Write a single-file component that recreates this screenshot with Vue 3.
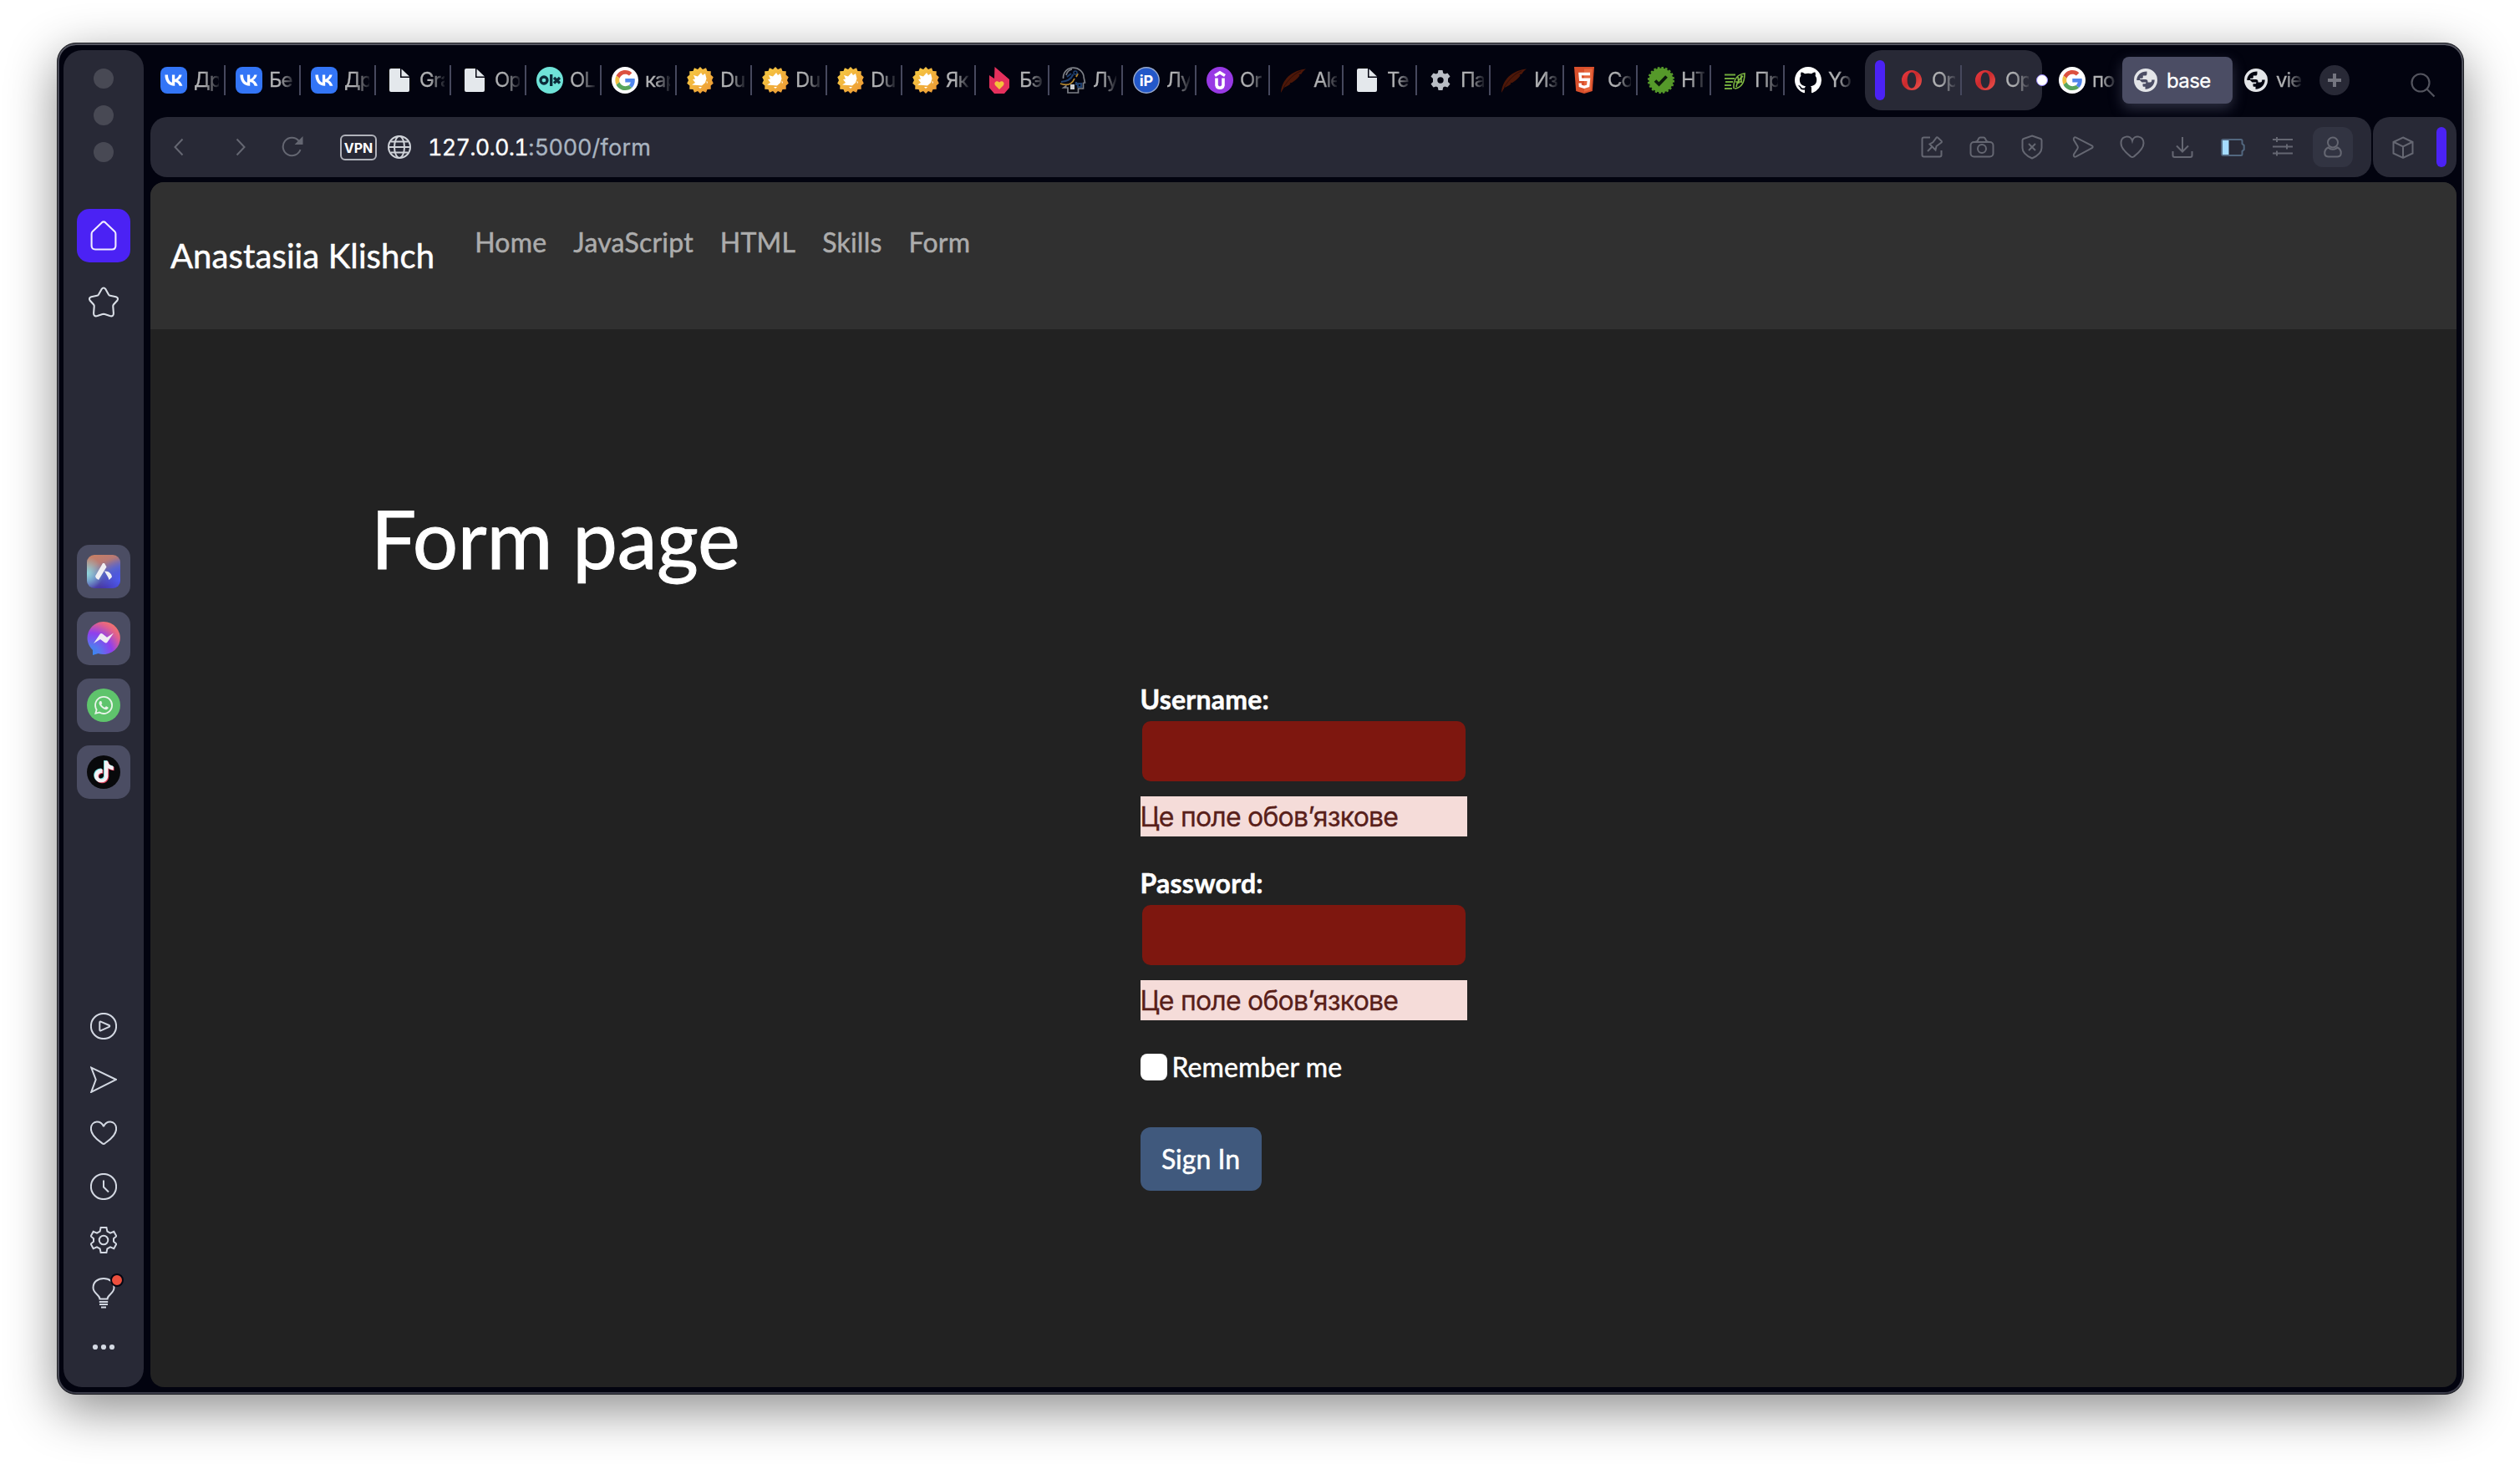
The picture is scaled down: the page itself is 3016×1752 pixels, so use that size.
<script setup>
const tabs = [
  { icon: 'vk', label: 'Др' },
  { icon: 'vk', label: 'Бе' },
  { icon: 'vk', label: 'Др' },
  { icon: 'file', label: 'Gra' },
  { icon: 'file', label: 'Op' },
  { icon: 'olx', label: 'OL' },
  { icon: 'google', label: 'кар' },
  { icon: 'dove', label: 'Du' },
  { icon: 'dove', label: 'Du' },
  { icon: 'dove', label: 'Du' },
  { icon: 'dove', label: 'Як', narrow: true },
  { icon: 'fire', label: 'Бэ', narrow: true },
  { icon: 'head', label: 'Лу', narrow: true },
  { icon: 'ip', label: 'Лу', narrow: true },
  { icon: 'udemy', label: 'Or', narrow: true },
  { icon: 'feather', label: 'Ale', narrow: true },
  { icon: 'file', label: 'Te', narrow: true },
  { icon: 'cog', label: 'Па', narrow: true },
  { icon: 'feather', label: 'Из', narrow: true },
  { icon: 'html5', label: 'Co', narrow: true },
  { icon: 'check', label: 'HT', narrow: true },
  { icon: 'leaf', label: 'Пр', narrow: true },
  { icon: 'github', label: 'Yo', narrow: true, last: true },
]
const apps = ['aria', 'messenger', 'whatsapp', 'tiktok']
const tools = ['player', 'send', 'heart', 'clock', 'gear', 'bulb', 'dots']
const actions = ['pin', 'camera', 'shield', 'flow', 'like', 'download', 'battery', 'sliders']
const links = ['Home', 'JavaScript', 'HTML', 'Skills', 'Form']
const fields = [
  { id: 'username', label: 'Username:', type: 'text' },
  { id: 'password', label: 'Password:', type: 'password' },
]
const requiredMessage = 'Це поле обовʼязкове'
</script>

<template>
  <div class="desktop">
    <svg class="sprite" aria-hidden="true">
      <defs>
        <linearGradient id="g-dove" x1="0" y1="0" x2="1" y2="1"><stop offset="0" stop-color="#f7cf45" /><stop offset="1" stop-color="#ec9433" /></linearGradient>
        <linearGradient id="g-opera" x1="0" y1="0" x2="1" y2="1"><stop offset="0" stop-color="#ef3b42" /><stop offset=".45" stop-color="#c92a2d" /><stop offset="1" stop-color="#f0554f" /></linearGradient>
        <linearGradient id="g-aria" x1=".1" y1="0" x2=".5" y2="1"><stop offset="0" stop-color="#c98063" /><stop offset=".3" stop-color="#b97a74" /><stop offset=".62" stop-color="#5d68b8" /><stop offset="1" stop-color="#4430a0" /></linearGradient>
        <radialGradient id="g-aria-l" cx="0" cy=".55" r=".5"><stop offset="0" stop-color="#8fdae0" /><stop offset="1" stop-color="#8fdae0" stop-opacity="0" /></radialGradient>
        <radialGradient id="g-aria-r" cx="1" cy=".75" r=".65"><stop offset="0" stop-color="#4d5cf0" /><stop offset="1" stop-color="#4d5cf0" stop-opacity="0" /></radialGradient>
        <radialGradient id="g-msg" cx=".1" cy="1" r="1.15"><stop offset="0" stop-color="#2f8df0" /><stop offset=".25" stop-color="#5578ee" /><stop offset=".58" stop-color="#8f3fee" /><stop offset=".85" stop-color="#e0608c" /><stop offset="1" stop-color="#f4756c" /></radialGradient>
      </defs>
      <symbol id="i-vk" viewBox="0 0 32 32">
        <rect width="32" height="32" rx="8" fill="#3375f6" />
        <path transform="translate(-.6 -.3) scale(1.33)" fill="#fff" d="M13.1 17.3c-5.2 0-8.5-3.6-8.6-9.9h2.7c.1 4.6 2.1 6.5 3.7 6.9V7.400h2.500v4c1.600-.2 3.200-2 3.800-4h2.500c-.4 2.400-2.200 4.200-3.500 4.900 1.300.6 3.300 2.200 4.100 5h-2.800c-.6-1.900-2.100-3.300-4.100-3.500v3.500z" />
      </symbol>
      <symbol id="i-file" viewBox="0 0 32 32">
        <path fill="#e4e8ec" d="M6 2h11v11h11v15a2 2 0 0 1-2 2H6a2 2 0 0 1-2-2V4a2 2 0 0 1 2-2zM18.500 2.500 28 11.500h-9.500z" />
      </symbol>
      <symbol id="i-olx" viewBox="0 0 32 32">
        <circle cx="16" cy="16" r="16" fill="#6fe3d8" />
        <g fill="none" stroke="#0b2a38" stroke-width="3.300"><circle cx="9" cy="16" r="4" /><path d="M17.700 9v14M21 13l7 6.500M28 13l-7 6.500" /></g>
      </symbol>
      <symbol id="i-google" viewBox="0 0 32 32">
        <circle cx="16" cy="16" r="16" fill="#fff" />
        <g transform="translate(4.300 4) scale(.5)">
          <path fill="#dc5140" d="M24 9.500c3.540 0 6.710 1.220 9.210 3.600l6.850-6.850C35.900 2.380 30.470 0 24 0 14.620 0 6.510 5.380 2.560 13.220l7.980 6.190C12.430 13.720 17.740 9.500 24 9.500z" />
          <path fill="#5086ec" d="M46.980 24.550c0-1.570-.15-3.090-.38-4.550H24v9.020h12.940c-.58 2.960-2.260 5.480-4.780 7.180l7.730 6c4.510-4.180 7.090-10.360 7.090-17.650z" />
          <path fill="#f1bf42" d="M10.530 28.590c-.48-1.450-.76-2.990-.76-4.590s.27-3.140.76-4.590l-7.980-6.190C.92 16.460 0 20.120 0 24c0 3.880.92 7.540 2.560 10.780l7.970-6.190z" />
          <path fill="#58a55c" d="M24 48c6.480 0 11.930-2.130 15.890-5.810l-7.730-6c-2.150 1.450-4.920 2.300-8.160 2.300-6.260 0-11.570-4.220-13.470-9.910l-7.980 6.190C6.510 42.620 14.620 48 24 48z" />
        </g>
      </symbol>
      <symbol id="i-dove" viewBox="0 0 32 32">
        <path fill="url(#g-dove)" d="M16 0l3 3 4-1.800 1.500 3.700 4.300.3-.2 4.300 3.200 2.700L30 16l1.800 3.800-3.200 2.700.2 4.300-4.300.3-1.500 3.700L19 29l-3 3-3-3-4 1.800-1.500-3.700-4.300-.3.200-4.300L.2 19.800 2 16 .2 12.200l3.200-2.700-.2-4.300 4.300-.3L9 1.200 13 3z" />
        <path fill="#fff" d="M8 10l5 1.500L17 7l2 3 3-2 1.500 6-1.500 5-4 3.500-5-.5-7-.5 4-2.500-3-4 3-.5zM14 24h4l-2 2zM23.500 17l1.500 1-1 2.500z" />
      </symbol>
      <symbol id="i-fire" viewBox="0 0 32 32">
        <path fill="#e5305c" d="M10.500 0 28 15v10l-6 7H10l-6-7V10l6 4z" />
        <path fill="#f5c33b" d="M16 27l-5-5c-2-3 1.500-6.500 5-3.500 3.500-3 7 .5 5 3.500z" />
      </symbol>
      <symbol id="i-head" viewBox="0 0 32 32">
        <g fill="none" stroke-width="1.700">
          <path stroke="#7d8087" d="M4.500 14C4 6 10 1.200 16.500 1.200S29 6 29.200 13l1.300 6-2 .5v6.500h-6v5H10v-6H5l3.500-2.500M8 10c1-4 4-6.500 7-7" />
          <path stroke="#1f3f6e" stroke-width="2.200" d="M2 18c7-1 11-2 14.500-9M9 12l5-4M20 18v4M22 20h4v4h-4z" />
          <path stroke="#b8892f" stroke-width="1.800" d="M1 20c8 3 14 1 17-6M22 8l-2 4" />
        </g>
        <path fill="#c9cbd0" d="M13 21h5v6h-5z" /><circle cx="19" cy="7" r="2" fill="none" stroke="#1f3f6e" stroke-width="1.500" />
      </symbol>
      <symbol id="i-ip" viewBox="0 0 32 32">
        <circle cx="16" cy="16" r="15.200" fill="#2358c9" stroke="#98a9cc" stroke-width="1.400" />
        <text x="16" y="22.500" text-anchor="middle" font-family="Inter, sans-serif" font-size="18" font-weight="700" fill="#fff">iP</text>
      </symbol>
      <symbol id="i-udemy" viewBox="0 0 32 32">
        <circle cx="16" cy="16" r="16" fill="#9839e4" />
        <path fill="none" stroke="#fff" stroke-width="3.600" d="M10 10.500l6-3.700 6 3.700M12 13.500v8.500a4.100 4.100 0 0 0 8 0v-8.500" />
      </symbol>
      <symbol id="i-feather" viewBox="0 0 32 32">
        <path fill="#4c1708" d="M1 31C1.500 20 9 5 31 2.500c-3 2-4 3.500-5.500 6l-3 1 1 1C20 15 17 17 14 19l-2.500.3 1 1C9.500 23 6.500 24 4.500 25z" />
        <path fill="none" stroke="#250b0a" stroke-width=".8" d="M4 25C10 15 17 8 25 5" />
      </symbol>
      <symbol id="i-cog" viewBox="0 0 24 24">
        <path fill="#b9bdc5" fill-rule="evenodd" d="M9.500 0h5l.7 3.400 2 1.100 3.300-1.100L23.500 7.600 21 10v4l2.500 2.400-3 4.200-3.300-1.100-2 1.100-.7 3.400h-5l-.7-3.400-2-1.100-3.300 1.100L.5 16.400 3 14v-4L.5 7.600l3-4.200 3.300 1.100 2-1.100zM12 8.300a3.700 3.700 0 1 0 0 7.400 3.700 3.700 0 0 0 0-7.400z" />
      </symbol>
      <symbol id="i-html5" viewBox="0 0 32 32">
        <path fill="#d9502c" d="M0 0h24l-2.200 29L12 32l-9.800-3z" /><path fill="#e8683f" d="M12 2.500h9.700l-1.900 25L12 29.700z" />
        <path fill="none" stroke="#fff" stroke-width="3.400" d="M19 8.500H7l.6 6.800h9.800l-.7 7.500L12 24.300l-4.700-1.500-.2-3.300" />
      </symbol>
      <symbol id="i-check" viewBox="0 0 32 32">
        <circle cx="16" cy="16" r="14.500" fill="#55992a" /><circle cx="16" cy="16" r="15" fill="none" stroke="#55992a" stroke-width="2.200" stroke-dasharray="2.600 2.110" />
        <path fill="none" stroke="#0b180c" stroke-width="3.800" d="M9 16.500l4.500 4.300 9-9.300" />
      </symbol>
      <symbol id="i-leaf" viewBox="0 0 32 32">
        <g fill="none" stroke="#6fa83c" stroke-width="2"><path d="M4 9.500h13M4 14h12M5 18h9M4 22h8M4 26h9" /><path stroke="#7fb842" d="M15 26c-.5-9 3-17 13-18 0 9-3 17-12 18M18 24c1-6 4-10 8-13M20 12l1 8M24 10v9M17 18h8" stroke-width="1.600" /></g>
      </symbol>
      <symbol id="i-github" viewBox="0 0 16 16">
        <path fill="#fff" d="M8 0C3.580 0 0 3.580 0 8c0 3.540 2.290 6.530 5.470 7.590.4.070.55-.17.55-.38 0-.19-.01-.82-.01-1.490-2.010.37-2.530-.49-2.690-.94-.09-.23-.48-.94-.82-1.130-.28-.15-.68-.52-.01-.53.630-.01 1.080.58 1.230.82.72 1.210 1.870.87 2.330.66.070-.52.280-.87.510-1.070-1.780-.2-3.640-.89-3.640-3.950 0-.87.310-1.590.82-2.150-.08-.2-.36-1.020.08-2.120 0 0 .67-.21 2.200.82.640-.18 1.320-.27 2-.27s1.360.09 2 .27c1.530-1.040 2.200-.82 2.200-.82.440 1.100.16 1.920.08 2.120.51.56.82 1.270.82 2.150 0 3.070-1.870 3.750-3.650 3.950.29.25.54.73.54 1.480 0 1.070-.01 1.930-.01 2.200 0 .21.15.46.55.38A8.010 8.010 0 0 0 16 8c0-4.420-3.580-8-8-8z" />
      </symbol>
      <symbol id="i-opera" viewBox="0 0 24 24">
        <path fill="url(#g-opera)" fill-rule="evenodd" d="M12 0a12 12 0 1 0 0 24 12 12 0 0 0 0-24zm0 2.500c3.200 0 5.300 4.200 5.300 9.500s-2.100 9.500-5.300 9.500-5.300-4.200-5.300-9.500S8.800 2.500 12 2.500z" />
      </symbol>
      <symbol id="i-world" viewBox="0 0 28 28">
        <path fill="#e3e5e8" fill-rule="evenodd" d="M14 0a14 14 0 1 0 0 28 14 14 0 0 0 0-28zM3.300 14C3.300 8.200 8 3.500 15.500 3.500v2.700c0 1.500-.8 2.300-2 2.300h-2.700v1.700c0 1-.6 1.600-1.600 1.600H7.500c-.7 0-.7 1.200 0 1.200h6.300c1.800 0 2.700 1 2.700 2.700v.8h2.700c1.300 0 2-.8 2-2v-1h3.500c0 6-4.500 11-11.200 11.200v-3h-1.700c-.8 0-1.300-.5-1.300-1.300v-2.200h2.500c1 0 1.400-.6 1.400-1.500V16.500H9.500L7 14z" />
      </symbol>

      <symbol id="i-aria" viewBox="0 0 40 40">
        <rect width="40" height="40" rx="9" fill="url(#g-aria)" /><rect width="40" height="40" rx="9" fill="url(#g-aria-l)" /><rect width="40" height="40" rx="9" fill="url(#g-aria-r)" />
        <path fill="#f0eff3" d="M19 10h2l2.500 4.500L14 30l-3-2-1-2.500zM21 19.500c5-.3 8.500 2.500 9 7l-3.500 3.500c-1-4-3-6-5.500-10.500z" />
      </symbol>
      <symbol id="i-messenger" viewBox="0 0 40 40">
        <path fill="url(#g-msg)" d="M20 0a20 19.500 0 1 1-6.500 38L7 40V34A19.500 19.500 0 0 1 20 0z" />
        <path fill="#efecf3" d="M8 26l7.500-11c1-1.500 2.500-1 3.500-.3l5 4 8-5.200-7.500 11c-1 1.300-2.300 1.200-3.500.3l-5-3.800z" />
      </symbol>
      <symbol id="i-whatsapp" viewBox="0 0 40 40">
        <circle cx="20" cy="20" r="20" fill="#5fc46c" />
        <path transform="translate(9 9) scale(.92)" fill="#e9f4ea" d="M17.472 14.382c-.297-.149-1.758-.867-2.030-.967-.273-.099-.471-.148-.67.15-.197.297-.767.966-.94 1.164-.173.199-.347.223-.644.075-.297-.15-1.255-.463-2.390-1.475-.883-.788-1.480-1.761-1.653-2.059-.173-.297-.018-.458.130-.606.134-.133.298-.347.446-.52.149-.174.198-.298.298-.497.099-.198.050-.371-.025-.52-.075-.149-.669-1.612-.916-2.207-.242-.579-.487-.5-.669-.51-.173-.008-.371-.01-.57-.01-.198 0-.52.074-.792.372-.272.297-1.040 1.016-1.040 2.479 0 1.462 1.065 2.875 1.213 3.074.149.198 2.096 3.200 5.077 4.487.709.306 1.262.489 1.694.625.712.227 1.360.195 1.871.118.571-.085 1.758-.719 2.006-1.413.248-.694.248-1.289.173-1.413-.074-.124-.272-.198-.57-.347m-5.421 7.403h-.004a9.870 9.870 0 0 1-5.031-1.378l-.361-.214-3.741.982.998-3.648-.235-.374a9.860 9.860 0 0 1-1.510-5.260c.001-5.450 4.436-9.884 9.888-9.884 2.640 0 5.122 1.030 6.988 2.898a9.825 9.825 0 0 1 2.893 6.994c-.003 5.450-4.437 9.884-9.885 9.884m8.413-18.297A11.815 11.815 0 0 0 12.050 0C5.495 0 .16 5.335.157 11.892c0 2.096.547 4.142 1.588 5.945L.057 24l6.305-1.654a11.882 11.882 0 0 0 5.683 1.448h.005c6.554 0 11.890-5.335 11.893-11.893a11.821 11.821 0 0 0-3.480-8.413z" />
      </symbol>
      <symbol id="note" viewBox="0 0 24 24">
        <path d="M12.525.02c1.310-.02 2.610-.01 3.910-.02.080 1.530.630 3.090 1.750 4.170 1.120 1.110 2.700 1.620 4.240 1.790v4.030c-1.440-.05-2.890-.35-4.200-.97-.57-.26-1.100-.59-1.620-.93-.01 2.920.01 5.840-.02 8.750-.08 1.400-.54 2.790-1.350 3.940-1.310 1.920-3.580 3.170-5.910 3.210-1.430.08-2.860-.31-4.080-1.030-2.020-1.190-3.440-3.370-3.650-5.710-.02-.5-.03-1-.01-1.490.18-1.900 1.120-3.720 2.580-4.960 1.660-1.440 3.980-2.130 6.150-1.720.02 1.480-.04 2.960-.04 4.440-.99-.32-2.150-.23-3.020.37-.63.41-1.110 1.040-1.360 1.750-.21.51-.15 1.070-.14 1.610.24 1.640 1.820 3.020 3.500 2.870 1.120-.01 2.190-.66 2.770-1.610.19-.33.4-.67.41-1.060.1-1.790.06-3.570.07-5.360.01-4.030-.01-8.050.02-12.070z" />
      </symbol>
      <symbol id="i-tiktok" viewBox="0 0 40 40">
        <circle cx="20" cy="20" r="20" fill="#08090b" />
        <use href="#note" x="6.500" y="5.800" width="26" height="26" fill="#6fdfe0" /><use href="#note" x="8.300" y="7.400" width="26" height="26" fill="#e0405c" /><use href="#note" x="7.400" y="6.600" width="26" height="26" fill="#f4f2f5" />
      </symbol>

      <symbol id="i-player" viewBox="0 0 32 32"><circle cx="16" cy="16" r="15.100" /><path d="M11.300 11.400c0-.8.600-1.100 1.300-.8l10 4.400c.9.400.9 1.400 0 1.800l-10 4.500c-.7.300-1.300 0-1.300-.8z" /></symbol>
      <symbol id="i-send" viewBox="0 0 32 32"><path d="M1.200 1.700 31 16 1.200 30.900 6.700 16z" /></symbol>
      <symbol id="i-heart" viewBox="0 0 32 32"><path d="M16 8.300C14 0.500.9 0 .9 11c0 9 11 15 13.600 17.400q1.500 1 3 0C20 26 31.100 20 31.100 11 31.100 0 18 .5 16 8.300z" /></symbol>
      <symbol id="i-clock" viewBox="0 0 32 32"><circle cx="16" cy="16" r="15.100" /><path d="M16 8.500v8l6 6" /></symbol>
      <symbol id="i-gear" viewBox="0 0 32 32"><path d="M12.600 1h6.800l1 4.600 3.600 2 4.300-1.800 3 5.600L28 14.300v3.400l3.300 2.900-3 5.600-4.300-1.800-3.600 2-1 4.600h-6.800l-1-4.600-3.600-2-4.300 1.800-3-5.600L4 17.700v-3.400L.7 11.400l3-5.600L8 7.600l3.600-2z" /><circle cx="16" cy="16" r="5.300" /></symbol>
      <symbol id="i-bulb" viewBox="0 0 32 38"><path d="M11.500 25.500c0-5-8-6.500-8-13.500C3.500 5 9 1 16 1s12.500 4 12.500 11c0 7-8 8.500-8 13.500zM10.800 29h10.400M11 32h10M13 35.500h6" /></symbol>
      <symbol id="i-dots" viewBox="0 0 32 32"><g fill="#d3d8e2" stroke="none"><circle cx="6" cy="16" r="3.100" /><circle cx="16" cy="16" r="3.100" /><circle cx="26" cy="16" r="3.100" /></g></symbol>

      <symbol id="i-pin" viewBox="0 0 32 32"><path d="M14 4.500H6.500q-2 0-2 2v19q0 2 2 2h19q2 0 2-2V20M11 21l5.500-5.500M13.500 12.500l7 7 1-4.500 6-4.500q1-1-.2-2l-4-3.800q-1-1-1.900.2l-4 5.400z" /></symbol>
      <symbol id="i-camera" viewBox="0 0 32 32"><rect x="2.500" y="10" width="27" height="17.500" rx="4" /><path d="M8 10l2.500-1L12 6q.6-1.500 2-1.500h4q1.400 0 2 1.500l1.500 3 2.500 1" /><circle cx="16" cy="18" r="5" /></symbol>
      <symbol id="i-shield" viewBox="0 0 32 32"><path d="M16 2.500 26 6q1.500.5 1.500 2v9c0 6-6 10-11.500 12.500C10.500 27 4.500 23 4.500 17V8q0-1.500 1.500-2zM12 12l8 8M20 12l-8 8" /></symbol>
      <symbol id="i-flow" viewBox="0 0 32 32"><path d="M6 7.500c-.8-2.300.7-3.800 2.700-2.800l19 9.700q2 1.300 0 2.800L8.700 27.300c-2 1-3.500-.5-2.700-2.600l4.500-7q.8-1.500 0-2.800z" /></symbol>
      <symbol id="i-like" viewBox="0 0 32 32"><path d="M16 8.500C14 1 2.500 2 2.500 11.500c0 7 8 13 11.800 16q1.700 1 3.400 0c3.800-3 11.800-9 11.800-16C29.500 2 18 1 16 8.500z" /></symbol>
      <symbol id="i-download" viewBox="0 0 32 32"><path d="M16 4v17M9 14.500l7 7 7-7M4.500 21v5q0 2 2 2h19q2 0 2-2v-5" /></symbol>
      <symbol id="i-battery" viewBox="0 0 32 32"><path stroke="#52677f" d="M5 7h21q1.500 0 1.500 1.500V12l2.200 2v5l-2.200 2v3.500q0 1.500-1.500 1.500H5q-2 0-2-2V9q0-2 2-2z" /><path fill="#a5dcff" stroke="none" d="M4 8H11.500v17H4z" /></symbol>
      <symbol id="i-sliders" viewBox="0 0 32 32"><path d="M4 7h24M4 15.500h24M4 23.500h24M9 4v6M21 12.500v6M9 20.500v6" /></symbol>
      <symbol id="i-person" viewBox="0 0 32 32"><circle cx="16" cy="10.500" r="6" /><path d="M10.500 16.500C7.500 18 6 21 6.300 24c.3 2 2 3.500 4.500 3.500h10.400c2.500 0 4.200-1.500 4.500-3.500.3-3-1.200-6-4.200-7.500-3 3-8 3-11 0z" /></symbol>
      <symbol id="i-cube" viewBox="0 0 32 32"><path d="M16 4.500 27.500 10v13.500L16 29 4.500 23.500V10zM5 10l11 5.500L27 10M16 15.500V29" /></symbol>
      <symbol id="i-globe" viewBox="0 0 28 28"><circle cx="14" cy="14" r="13" /><ellipse cx="14" cy="14" rx="6" ry="13" /><path d="M1 14h26M3.500 7.500h21M3.500 20.500h21" /></symbol>
    </svg>

    <div class="window">
      <aside class="sidebar">
        <div class="lights"><i v-for="n in 3" :key="n" class="light" /></div>
        <div class="tile home">
          <svg width="32" height="36" viewBox="0 0 32 36"><path d="M13.800 2.400q2.200-2 4.400 0l11 10.500q1.200 1.300 1.200 3V30q0 4.500-4.500 4.500H6.100Q1.600 34.500 1.600 30V15.900q0-1.700 1.200-3z" /></svg>
        </div>
        <div class="tile">
          <svg width="38" height="38" viewBox="0 0 38 38"><path d="M16.500 3.200q2.500-3.500 5 0l3.500 6.300q.6 1 1.800 1.200l7 1.500q3.400 1.300 1.600 4.300l-4.500 5q-.8 1-.6 2.300l.6 8c.2 3.500-2 4-4.500 3.300l-6-2q-1.400-.5-2.800 0l-6 2c-2.500.7-4.700.2-4.500-3.300l.6-8q.2-1.300-.6-2.300l-4.500-5q-1.800-3 1.600-4.300l7-1.500q1.200-.2 1.800-1.200z" /></svg>
        </div>
        <div class="apps">
          <div v-for="app in apps" :key="app" class="tile app"><svg width="40" height="40"><use :href="`#i-${app}`" /></svg></div>
        </div>
        <div class="tools">
          <div v-for="tool in tools" :key="tool" class="tool">
            <svg :class="tool" width="32" height="32"><use :href="`#i-${tool}`" /></svg>
            <i v-if="tool === 'bulb'" class="alert" />
          </div>
        </div>
      </aside>

      <main class="main">
        <div class="tabstrip">
          <div v-for="(tab, i) in tabs" :key="i" class="tab" :class="{ narrow: tab.narrow, last: tab.last }">
            <span class="favicon"><svg :class="tab.icon"><use :href="`#i-${tab.icon}`" /></svg></span>
            <span class="label">{{ tab.label }}</span>
          </div>
          <div class="island">
            <i class="bar" />
            <div v-for="n in 2" :key="n" class="tab narrow mini" :class="{ last: n === 2 }">
              <span class="favicon"><svg><use href="#i-opera" /></svg></span>
              <span class="label">Op</span>
            </div>
            <i class="knob" />
          </div>
          <div class="tab narrow last after">
            <span class="favicon"><svg><use href="#i-google" /></svg></span>
            <span class="label">по</span>
          </div>
          <div class="active-tab">
            <svg class="world"><use href="#i-world" /></svg>
            <span>base</span>
          </div>
          <div class="tab last next">
            <svg class="world"><use href="#i-world" /></svg>
            <span class="label">vie</span>
          </div>
          <div class="plus"><svg width="16" height="16" viewBox="0 0 16 16"><path d="M8 0v16M0 8h16" /></svg></div>
          <svg class="search" width="32" height="32" viewBox="0 0 32 32"><circle cx="13" cy="13" r="10.500" /><path d="M20.500 20.500 29.500 29.500" /></svg>
        </div>

        <div class="toolbars">
          <div class="toolbar">
            <svg class="back" width="12" height="22" viewBox="0 0 12 22"><path d="M10.500 1.500 1.500 11l9 9.500" /></svg>
            <svg class="forward" width="12" height="22" viewBox="0 0 12 22"><path d="M1.500 1.500 10.500 11l-9 9.500" /></svg>
            <svg class="reload" width="26" height="26" viewBox="0 0 26 26"><path d="M22.500 16A10.700 10.700 0 1 1 20.500 5.500" /><path class="tip" d="M24.500 2.500V9h-6.500z" /></svg>
            <span class="vpn">VPN</span>
            <svg class="globe" width="28" height="28"><use href="#i-globe" /></svg>
            <span class="url"><b>127.0.0.1</b>:5000/form</span>
            <div class="actions">
              <svg v-for="a in actions" :key="a" width="32" height="32"><use :href="`#i-${a}`" /></svg>
            </div>
            <div class="profile"><svg width="32" height="32"><use href="#i-person" /></svg></div>
          </div>
          <div class="toolbar side">
            <svg width="32" height="32"><use href="#i-cube" /></svg>
            <i class="bar" />
          </div>
        </div>

        <section class="page">
          <header class="navbar">
            <a class="brand">Anastasiia Klishch</a>
            <nav class="nav"><a v-for="link in links" :key="link">{{ link }}</a></nav>
          </header>
          <div class="container">
            <h1>Form page</h1>
            <form class="form" @submit.prevent>
              <div v-for="field in fields" :key="field.id" class="field">
                <label :for="field.id">{{ field.label }}</label>
                <input :id="field.id" class="control" :type="field.type">
                <div class="error">{{ requiredMessage }}</div>
              </div>
              <label class="remember"><input type="checkbox"><span>Remember me</span></label>
              <button type="submit">Sign In</button>
            </form>
          </div>
        </section>
      </main>
    </div>
  </div>
</template>

<style>
body { background: #fff; }
</style>

<style scoped>
.desktop { box-sizing: border-box; width: 3016px; height: 1752px; padding: 51px 0 0 68px; overflow: hidden; background: #fff; font-family: Inter, sans-serif; }
.desktop * { box-sizing: border-box; }
.sprite { position: absolute; width: 0; height: 0; }
svg { display: block; flex: none; }

.window { display: flex; gap: 8px; width: 2881px; height: 1618px; padding: 8px 7px; border: 1px solid #1d1e23; border-radius: 23px; background: #02030f; box-shadow: inset 0 1px 0 1px #565762, inset 0 0 0 2px #3a3b48, 0 18px 60px rgba(0, 0, 0, .45); }

.sidebar { display: flex; flex-direction: column; align-items: center; flex: none; width: 96px; height: 1600px; padding: 22px 0 16px; border-radius: 22px; background: #282936; }
.lights { display: flex; flex-direction: column; gap: 20px; margin-bottom: 56px; }
.light { width: 24px; height: 24px; border-radius: 50%; background: #484954; }
.tile { display: flex; align-items: center; justify-content: center; width: 64px; height: 64px; border-radius: 15px; }
.tile svg { fill: none; stroke: #d9dee6; stroke-width: 2.100; }
.home { margin-bottom: 16px; background: #4b22f4; }
.home svg { stroke: #f0ecff; }
.apps { display: flex; flex-direction: column; gap: 16px; margin-top: 258px; }
.app { background: #4b4d63; }
.app svg { fill: initial; stroke: none; }
.tools { margin-top: auto; }
.tool { position: relative; display: flex; align-items: center; justify-content: center; width: 64px; height: 64px; }
.tool svg { fill: none; stroke: #d3d8e2; stroke-width: 2; }
.tool .bulb { width: 32px; height: 38px; }
.alert { position: absolute; left: 40px; top: 8px; width: 16px; height: 16px; border: 2px solid #060713; border-radius: 50%; background: #ed4f3d; }

.main { display: flex; flex-direction: column; width: 2760px; }
.tabstrip { display: flex; align-items: center; height: 72px; margin-bottom: 8px; color: #b0b1b3; font-size: 24px; -webkit-text-stroke: .3px currentColor; }
.tab { display: flex; align-items: center; flex: none; width: 90px; height: 36px; padding-left: 12px; border-right: 2px solid #46485d; }
.tab.narrow { width: 88px; }
.tab.last { border-right-color: transparent; }
.favicon { display: flex; align-items: center; justify-content: center; flex: none; width: 32px; height: 32px; margin-right: 8px; }
.favicon svg { width: 32px; height: 32px; }
.favicon .cog { width: 24px; height: 24px; }
.label { flex: none; width: 30px; overflow: hidden; white-space: nowrap; line-height: 36px; letter-spacing: -1px; -webkit-mask-image: linear-gradient(90deg, #000 40%, transparent 110%); mask-image: linear-gradient(90deg, #000 40%, transparent 110%); }
.narrow .label { width: 28px; }
.island { position: relative; display: flex; align-items: center; flex: none; width: 212px; height: 72px; margin: 0 8px; padding-left: 12px; border-radius: 20px; background: #282936; }
.bar { flex: none; width: 12px; height: 48px; border-radius: 6px; background: #4b22f4; }
.island .mini:nth-child(2) { margin-left: 4px; }
.mini { padding-left: 16px; }
.mini .favicon { width: 24px; margin-right: 12px; }
.mini .favicon svg { width: 24px; height: 24px; }
.knob { position: absolute; right: -7px; top: 29px; width: 14px; height: 14px; border: 1px solid #8f7cf8; border-radius: 50%; background: #fff; }
.active-tab { display: flex; align-items: center; gap: 11px; flex: none; width: 132px; height: 56px; padding-left: 14px; border-radius: 8px; background: #4b4d64; box-shadow: 0 6px 16px rgba(110, 112, 140, .4); color: #fff; letter-spacing: -.6px; }
.world { width: 28px; height: 28px; }
.next { width: 104px; padding-left: 14px; }
.next .world { margin-right: 10px; }
.plus { display: flex; align-items: center; justify-content: center; flex: none; width: 36px; height: 36px; border-radius: 50%; background: #282936; }
.plus path { stroke: #74757f; stroke-width: 4; }
.search { margin: 12px 24px 0 auto; fill: none; stroke: #53545e; stroke-width: 2.200; }

.toolbars { position: relative; display: flex; gap: 2px; height: 72px; margin-bottom: 6px; }
.toolbar { display: flex; align-items: center; width: 2658px; height: 72px; padding-right: 22px; padding-left: 28px; border-radius: 20px; background: #282936; fill: none; stroke: #656772; stroke-width: 2; }
.back { margin-right: 62px; }
.forward { margin-right: 43px; }
.reload { margin-right: 44px; }
.tip { fill: #656772; }
.vpn { width: 44px; height: 31px; margin-right: 13px; border: 2px solid #b0b2ba; border-radius: 6px; color: #fff; font-size: 16px; font-weight: 700; line-height: 28px; text-align: center; }
.globe { margin-right: 20px; stroke: #d0d3d9; }
.url { color: #a9b4c0; font-size: 27px; letter-spacing: .25px; -webkit-text-stroke: .3px currentColor; }
.url b { color: #fff; font-weight: 400; font-variant-numeric: tabular-nums; letter-spacing: -.75px; }
.actions { display: flex; gap: 28px; margin-left: auto; }
.profile { display: flex; align-items: center; justify-content: center; width: 48px; height: 48px; margin-left: 20px; border-radius: 12px; background: #323442; }
.toolbar.side { justify-content: space-between; width: 100px; padding: 0 12px 0 20px; }

.page { flex: 1; overflow: hidden; border-radius: 16px; background: #222; color: #fff; font-family: Lato, sans-serif; font-size: 32px; line-height: 48px; -webkit-text-stroke: .5px currentColor; }
.navbar { display: flex; align-items: center; height: 176px; padding-left: 24px; background: #303030; }
.brand { margin-right: 32px; font-size: 40px; line-height: 60px; letter-spacing: .12px; }
.nav { display: flex; padding-bottom: 32px; color: #acacac; letter-spacing: .22px; }
.nav a { padding: 16px; }
.container { width: 2280px; margin: 0 auto; padding: 192px 24px 0; }
h1 { margin: 0; font-size: 96px; font-weight: 400; line-height: 115px; letter-spacing: -.35px; -webkit-text-stroke-width: .9px; }
.form { width: 391px; margin: 112px auto 0; }
.field { margin-bottom: 32px; }
.field label { display: block; font-weight: 700; letter-spacing: .2px; }
.control { display: block; width: 391px; height: 76px; margin: 0; padding: 12px 24px; border: 2px solid transparent; border-radius: 12px; outline: none; background: #7e170f; background-clip: padding-box; color: #fff; font: inherit; }
.error { height: 48px; margin-top: 16px; background: #f5dcd9; color: #58201a; font-family: Inter, sans-serif; white-space: nowrap; line-height: 50px; letter-spacing: -.78px; -webkit-text-stroke-width: .3px; }
.remember { display: flex; align-items: center; height: 48px; letter-spacing: .1px; }
.remember input { width: 32px; height: 32px; margin: 0 6px 0 0; border-radius: 8px; background: #fff; appearance: none; }
button { display: block; width: 145px; height: 76px; margin-top: 48px; padding: 0; border: 0; border-radius: 12px; background: #40597d; color: #fff; font: inherit; -webkit-text-stroke: .5px currentColor; }
</style>
